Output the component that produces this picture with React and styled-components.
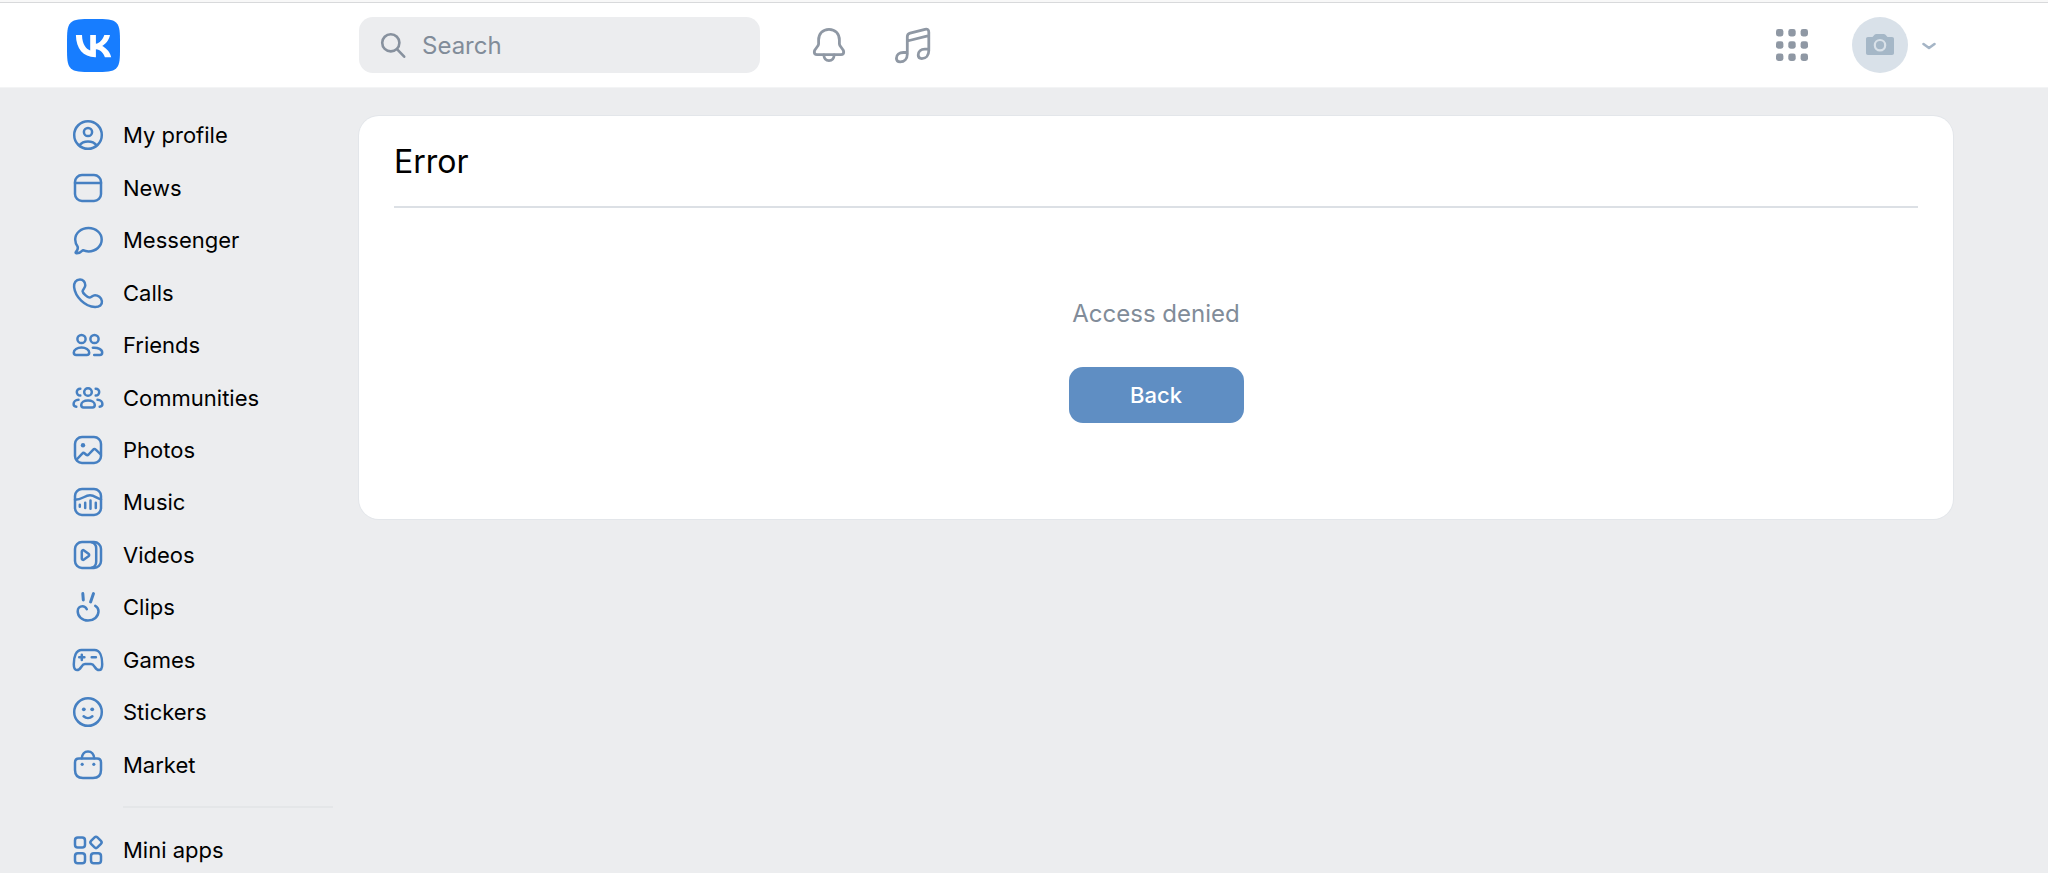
import styled, { createGlobalStyle } from "styled-components";

const GlobalStyle = createGlobalStyle`
  * {
    box-sizing: border-box;
  }

  body {
    margin: 0;
    background-color: #ecedef;
    color: #000;
    font-family: Inter, "Liberation Sans", sans-serif;
    font-size: 22px;
  }
`;

const TopLine = styled.div`
  height: 3px;
  background-color: #f8f8f8;
  border-bottom: 1px solid #d8d9db;
`;

const Header = styled.header`
  background-color: #fff;
  border-bottom: 1px solid #f3f4f5;
`;

const HeaderInner = styled.div`
  display: flex;
  align-items: center;
  height: 84px;
  padding: 0 112px 0 67px;
`;

const LogoLink = styled.a`
  display: flex;
  width: 292px;
`;

const SearchBox = styled.label`
  display: flex;
  align-items: center;
  gap: 15px;
  width: 401px;
  height: 56px;
  margin-right: 50px;
  padding: 0 20px;
  border-radius: 14px;
  background-color: #ecedef;
  color: #87919e;
`;

const SearchInput = styled.input`
  flex: 1;
  min-width: 0;
  padding: 0;
  border: none;
  outline: none;
  background: none;
  font-family: inherit;
  font-size: 24px;
  color: #000;

  &::placeholder {
    color: #818c99;
    opacity: 1;
  }
`;

const IconButton = styled.button`
  display: flex;
  margin: 0;
  padding: 0;
  border: none;
  background: none;
  color: #8f98a4;
  cursor: pointer;
`;

const Shortcuts = styled.div`
  display: flex;
  gap: 45px;
`;

const Account = styled.div`
  display: flex;
  align-items: center;
  gap: 44px;
  margin-left: auto;
`;

const ProfileButton = styled(IconButton)`
  align-items: center;
  gap: 14px;
  color: #a5b5c6;
`;

const Avatar = styled.span`
  display: flex;
  align-items: center;
  justify-content: center;
  width: 56px;
  height: 56px;
  border-radius: 50%;
  background-color: #d9e1e9;
`;

const Page = styled.div`
  display: flex;
  align-items: flex-start;
  padding: 21px 95px 0 67px;
`;

const SideBar = styled.nav`
  flex: none;
  width: 292px;
  padding-right: 26px;
`;

const Menu = styled.ul`
  display: grid;
  grid-auto-rows: 1fr;
  min-height: ${(props) => props.$height};
  margin: 0;
  padding: 0;
  list-style: none;
`;

const MenuLink = styled.a`
  display: flex;
  align-items: center;
  gap: 17px;
  height: 100%;
  padding-left: 3px;
  color: #000;
  text-decoration: none;

  svg {
    flex: none;
    color: #4680c2;
  }
`;

const Separator = styled.hr`
  height: 2px;
  margin: 15px 0 16px 56px;
  border: none;
  background-color: #e4e6e8;
`;

const Card = styled.main`
  flex: 1;
  margin-top: 7px;
  padding: 0 35px;
  border-radius: 20px;
  background-color: #fff;
  box-shadow: 0 0 0 1px #e3e6ea;
`;

const Title = styled.h1`
  margin: 0;
  padding: 26px 0 24px;
  border-bottom: 2px solid #dce0e5;
  font-size: 32px;
  line-height: 40px;
  font-weight: 400;
`;

const Message = styled.div`
  display: flex;
  flex-direction: column;
  align-items: center;
  gap: 37px;
  padding: 90px 0 96px;
`;

const MessageText = styled.p`
  margin: 0;
  font-size: 24px;
  line-height: 32px;
  color: #818c99;
`;

const BackButton = styled.button`
  width: 175px;
  height: 56px;
  padding: 0;
  border: none;
  border-radius: 14px;
  background-color: #5f8ec3;
  color: #fff;
  font-family: inherit;
  font-size: 22px;
  font-weight: 500;
  cursor: pointer;
`;

const Icon = ({ children, size = 36, stroke = 2.5 }) => (
  <svg
    width={size}
    height={size}
    viewBox={`0 0 ${size} ${size}`}
    fill="none"
    stroke="currentColor"
    strokeWidth={stroke}
    strokeLinecap="round"
    strokeLinejoin="round"
    aria-hidden="true"
  >
    {children}
  </svg>
);

const Frame = () => <rect x="5" y="5" width="26" height="26" rx="7" />;

const Dot = ({ x, y, r }) => (
  <circle cx={x} cy={y} r={r} fill="currentColor" stroke="none" />
);

const menuItems = [
  {
    name: "My profile",
    icon: (
      <>
        <circle cx="18" cy="18" r="13.8" />
        <circle cx="18" cy="15" r="4.1" />
        <path d="M9.4 28.3c2-2.6 5-3.9 8.6-3.9s6.6 1.3 8.6 3.9" />
      </>
    ),
  },
  {
    name: "News",
    icon: (
      <>
        <Frame />
        <path d="M5 13h26" />
      </>
    ),
  },
  {
    name: "Messenger",
    icon: (
      <path d="M13 28.2c1.7.8 3.6 1.2 5.5 1.2 7.4 0 13.2-5.2 13.2-11.8S25.9 6 18.5 6 5.2 11 5.2 17.6c0 2.7.9 5 2.5 7.1.5 1.9-.3 3.6-1.9 5.3-.4.5-.2 1.1.5 1.2 2.7.2 5-1.2 6.7-3z" />
    ),
  },
  {
    name: "Calls",
    icon: (
      <path d="M10 4.6C5.8 4.6 3.7 8 4.1 12.2 5.2 22 15 31.6 25 32.1c4.5.1 7.4-2.2 6.9-5.9-.5-3.7-3.9-6-6.9-6-2.7 0-3.5 2.4-5.7 2.4-1.7 0-6.6-4.5-6.7-6.2-.1-1.9 2.7-3.2 2.7-6.2C15.3 7 13 4.6 10 4.6z" />
    ),
  },
  {
    name: "Friends",
    icon: (
      <>
        <circle cx="11.5" cy="12" r="4.1" />
        <circle cx="24.5" cy="12" r="4.1" />
        <path d="M3.8 25.5c0-2.8 3.4-4.9 7.7-4.9s7.7 2.1 7.7 4.9c0 1.7-.9 2.5-2.4 2.5H6.2c-1.5 0-2.4-.8-2.4-2.5z" />
        <path d="M22.8 20.7c5.5-.5 9.4 1.9 9.4 4.8 0 1.7-.9 2.5-2.4 2.5h-5.6" />
      </>
    ),
  },
  {
    name: "Communities",
    icon: (
      <>
        <circle cx="18" cy="12" r="3.8" />
        <path d="M11.2 25c0-2.6 2.9-4.5 6.8-4.5s6.8 1.9 6.8 4.5c0 1.6-.9 2.4-2.3 2.4h-9c-1.4 0-2.3-.8-2.3-2.4z" />
        <path d="M10.3 8.7c-2-.1-3.5 1.4-3.5 3.4s1.5 3.5 3.5 3.4M8.5 19.8c-3 0-4.9 2.2-4.9 4.3 0 1.6.9 2.6 2.7 2.7" />
        <path d="M25.7 8.7c2-.1 3.5 1.4 3.5 3.4s-1.5 3.5-3.5 3.4M27.5 19.8c3 0 4.9 2.2 4.9 4.3 0 1.6-.9 2.6-2.7 2.7" />
      </>
    ),
  },
  {
    name: "Photos",
    icon: (
      <>
        <Frame />
        <Dot x="13" y="13.3" r="2.2" />
        <path d="M6.7 27.5l5.5-5.9c.8-.9 1.7-.9 2.6-.1l1.4 1.2c.8.7 1.6.6 2.4-.2l4.4-4.7c.9-1 1.9-1 2.8-.1l4.9 4.6" />
      </>
    ),
  },
  {
    name: "Music",
    icon: (
      <>
        <Frame />
        <path d="M5 15.7c7.5 0 9.5-4.4 15-4.4 4.5 0 6.5 2.9 11 4.1M9.8 20.8v2M15.2 18.8v5.2M20.5 16.5v8.3M25.8 18.8v5.2" />
      </>
    ),
  },
  {
    name: "Videos",
    icon: (
      <>
        <Frame />
        <path d="M21.5 5.2c3.1.6 4.7 2.9 4.7 6.3v13c0 3.4-1.6 5.7-4.7 6.3" />
        <path d="M11.8 14.6v6.8c0 1.3 1.2 1.9 2.2 1.2l4.5-3.3c.9-.7.9-1.9 0-2.6L14 13.4c-1-.7-2.2-.1-2.2 1.2z" />
      </>
    ),
  },
  {
    name: "Clips",
    icon: (
      <>
        <path d="M12.8 4.6l.5 6.3M23.5 4.6l-2.9 8.3" strokeWidth="3" />
        <path d="M16.8 20.2c-1-2-2.6-3-4.4-3-2.7 0-4.7 2.2-4.7 5 0 5.2 4.5 9.4 10.3 9.4s10.5-4 10.5-9.3c0-2.4-1.3-4.3-3.3-5.5" />
      </>
    ),
  },
  {
    name: "Games",
    icon: (
      <>
        <path d="M11.5 8h13c5.5 0 7.7 6.8 7.7 14.2 0 3.9-1.1 5.9-3.2 5.9-4.1 0-4.3-6.1-8-6.1h-6c-3.7 0-3.9 6.1-8 6.1-2.1 0-3.2-2-3.2-5.9C3.8 14.8 6 8 11.5 8z" />
        <path d="M9.2 15.3h5.2M11.8 12.7v5.2M21.7 15.3h4.2" />
      </>
    ),
  },
  {
    name: "Stickers",
    icon: (
      <>
        <circle cx="18" cy="18" r="13.8" />
        <Dot x="13.8" y="15.3" r="1.9" />
        <Dot x="22.2" y="15.3" r="1.9" />
        <path d="M13.6 22.3c2.5 2.2 6.3 2.2 8.8 0" />
      </>
    ),
  },
  {
    name: "Market",
    icon: (
      <>
        <path d="M9 11.6h18c2.5 0 4 1.5 4 4V23c0 5.3-2.7 8-8 8H13c-5.3 0-8-2.7-8-8v-7.4c0-2.5 1.5-4 4-4z" />
        <path d="M11.8 11.3c.2-4.1 2.7-6.9 6.2-6.9s6 2.8 6.2 6.9" />
        <Dot x="12.2" y="17.3" r="1.6" />
        <Dot x="23.8" y="17.3" r="1.6" />
      </>
    ),
  },
];

const extraItems = [
  {
    name: "Mini apps",
    icon: (
      <>
        <rect x="5" y="5.6" width="10" height="10" rx="2.8" />
        <rect x="5" y="21.3" width="10" height="10" rx="2.8" />
        <rect x="21" y="21.3" width="10" height="10" rx="2.8" />
        <rect x="21.5" y="5.9" width="9" height="9" rx="2" transform="rotate(45 26 10.4)" />
      </>
    ),
  },
];

const MenuList = ({ items, height }) => (
  <Menu $height={height}>
    {items.map((item) => (
      <li key={item.name}>
        <MenuLink href="#">
          <Icon>{item.icon}</Icon>
          {item.name}
        </MenuLink>
      </li>
    ))}
  </Menu>
);

const Logo = () => (
  <svg width="53" height="53" viewBox="0 0 53 53" aria-hidden="true">
    <path
      fill="#177dff"
      d="M0 25.4C0 13.5 0 7.5 3.7 3.7 7.5 0 13.5 0 25.4 0h2.2C39.5 0 45.5 0 49.3 3.7 53 7.5 53 13.5 53 25.4v2.2c0 11.9 0 17.9-3.7 21.7C45.5 53 39.5 53 27.6 53h-2.2c-11.9 0-17.9 0-21.7-3.7C0 45.5 0 39.5 0 27.6z"
    />
    <path
      fill="#fff"
      d="M28.2 38.2C16.1 38.2 9.2 29.9 8.9 16.1H15c.2 10.1 4.700 14.400 8.200 15.300V16.100h5.700v8.700c3.500-.4 7.200-4.400 8.400-8.700H43c-1 5.400-4.900 9.400-7.800 11 2.800 1.300 7.300 4.700 9 11.100h-6.300c-1.300-4.200-4.700-7.400-9-7.900v7.900z"
    />
  </svg>
);

const AppsGrid = () => (
  <svg width="32" height="32" viewBox="0 0 32 32" fill="currentColor" aria-hidden="true">
    {[0, 12.3, 24.6].map((y) =>
      [0, 12.3, 24.6].map((x) => (
        <rect key={`${x}-${y}`} x={x} y={y} width="7.4" height="7.4" rx="2.4" />
      ))
    )}
  </svg>
);

const Camera = () => (
  <svg width="28" height="22" viewBox="0 0 28 22" aria-hidden="true">
    <path
      fill="#a5b7c7"
      d="M2 3h4.5l2-2.2C9 .2 9.5 0 10.3 0h7.4c.8 0 1.3.2 1.8.8l2 2.2H26c1.3 0 2 .7 2 2v14c0 1.3-.7 2-2 2H2c-1.3 0-2-.7-2-2V5c0-1.3.7-2 2-2z"
    />
    <circle cx="14" cy="11.2" r="5.2" fill="none" stroke="#d9e1e9" strokeWidth="2.2" />
  </svg>
);

const App = () => {
  return (
    <>
      <GlobalStyle />
      <TopLine />
      <Header>
        <HeaderInner>
          <LogoLink href="#" aria-label="VK">
            <Logo />
          </LogoLink>
          <SearchBox>
            <Icon size={28} stroke={2.6}>
              <circle cx="11.8" cy="11.8" r="8.6" />
              <path d="M18.2 18.400l7 7.300" />
            </Icon>
            <SearchInput type="search" placeholder="Search" aria-label="Search" />
          </SearchBox>
          <Shortcuts>
            <IconButton type="button" aria-label="Notifications">
              <Icon size={38} stroke={2.8}>
                <path d="M19 3.3C12.5 3.3 8.6 8 8.6 14v4c0 3-4.3 4.4-4.3 8 0 1.6 1 2.6 2.7 2.6h24c1.7 0 2.7-1 2.7-2.6 0-3.6-4.3-5-4.3-8v-4c0-6-3.9-10.7-10.4-10.7z" />
                <path d="M13.8 29c.3 3.6 2.2 5.6 5.2 5.6s4.9-2 5.2-5.600" />
              </Icon>
            </IconButton>
            <IconButton type="button" aria-label="Music">
              <Icon size={38} stroke={2.8}>
                <path d="M14.3 26.5h-4c-4 0-6.9 2.5-6.9 5.8 0 2.3 1.5 3.6 3.8 3.6 4 0 7.1-3 7.1-7.9V10.8c0-2 .9-3.2 2.8-3.7L32 3.4c2.4-.6 3.8.4 3.8 2.8v18.3c0 4.9-2.9 8.1-7 8.1-2.2 0-3.6-1.3-3.6-3.5 0-3.4 2.7-5.9 6.6-5.9h4M14.3 15l21.5-5.3" />
              </Icon>
            </IconButton>
          </Shortcuts>
          <Account>
            <IconButton type="button" aria-label="Services">
              <AppsGrid />
            </IconButton>
            <ProfileButton type="button" aria-label="Account menu">
              <Avatar>
                <Camera />
              </Avatar>
              <Icon size={14} stroke={2.6}>
                <path d="M1.5 6L7 10l5.5-4" />
              </Icon>
            </ProfileButton>
          </Account>
        </HeaderInner>
      </Header>
      <Page>
        <SideBar>
          <MenuList items={menuItems} height="682px" />
          <Separator />
          <MenuList items={extraItems} height="52px" />
        </SideBar>
        <Card>
          <Title>Error</Title>
          <Message>
            <MessageText>Access denied</MessageText>
            <BackButton type="button">Back</BackButton>
          </Message>
        </Card>
      </Page>
    </>
  );
};

export default App;
